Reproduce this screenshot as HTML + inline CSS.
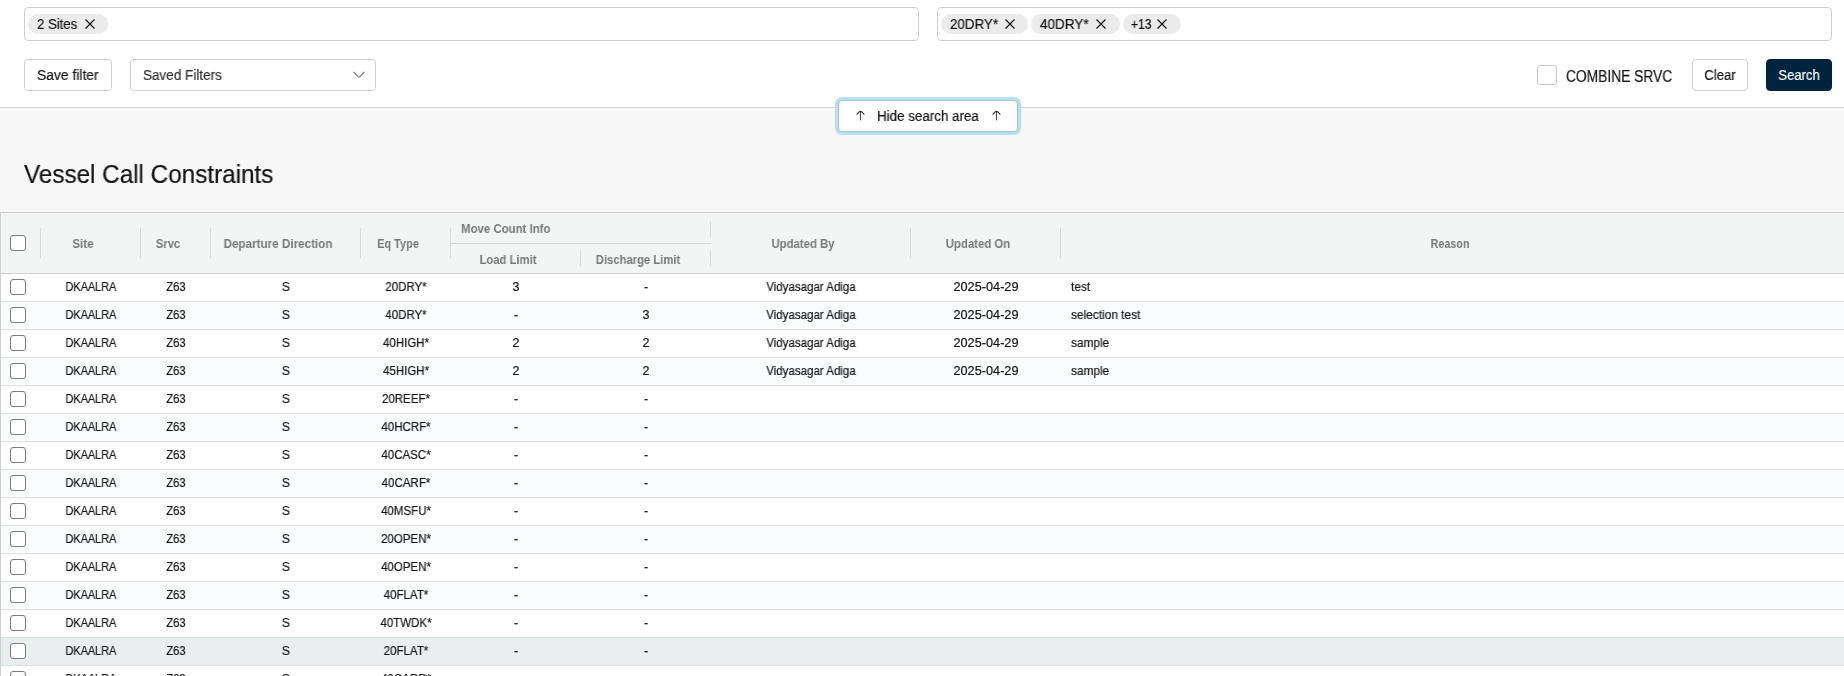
<!DOCTYPE html><html><head><meta charset="utf-8"><style>
*{box-sizing:border-box;margin:0;padding:0}
html,body{width:1844px;height:676px;overflow:hidden;background:#f7f7f7;font-family:"Liberation Sans", sans-serif;color:#141414;position:relative}
.a{position:absolute}
.t{position:absolute;white-space:nowrap;will-change:transform;-webkit-text-stroke:0.2px currentColor}
.box{position:absolute;border:1px solid #d0d0d0;border-radius:4px;background:#fff}
.chip{position:absolute;top:14px;height:20px;border-radius:10px;background:#ebebeb}
.vs{position:absolute;width:1px;background:#d9dcdc}
.row{position:absolute;left:1px;width:1843px;height:28px;border-bottom:1px solid #dcdfdf;background:#fff}
.cb{position:absolute;left:10px;width:16px;height:16px;border:1.5px solid #7b7b7b;border-radius:3px;background:#fff}
</style></head><body>
<div class="a" style="left:0;top:0;width:1844px;height:108px;background:#fff;border-bottom:1px solid #d6d6d6"></div>
<div class="box" style="left:24px;top:7px;width:895px;height:34px"></div>
<div class="box" style="left:937px;top:7px;width:895px;height:34px"></div>
<div class="chip" style="left:28px;width:80px"></div>
<div class="t" style="left:36.5px;transform-origin:0 50%;transform:scaleX(0.94);top:14.0px;font-size:14px;line-height:20px;color:#141414;">2 Sites</div>
<div class="a" style="left:85px;top:19px;line-height:0;width:10px;height:10px"><svg width="10" height="10" viewBox="0 0 10 10"><path d="M0.5 0.5L9.5 9.5M9.5 0.5L0.5 9.5" stroke="#141414" stroke-width="1.15" fill="none"/></svg></div>
<div class="chip" style="left:941px;width:87px"></div>
<div class="t" style="left:949.5px;transform-origin:0 50%;transform:scaleX(0.955);top:14.0px;font-size:14px;line-height:20px;color:#141414;">20DRY*</div>
<div class="a" style="left:1004.5px;top:19px;line-height:0;width:10px;height:10px"><svg width="10" height="10" viewBox="0 0 10 10"><path d="M0.5 0.5L9.5 9.5M9.5 0.5L0.5 9.5" stroke="#141414" stroke-width="1.15" fill="none"/></svg></div>
<div class="chip" style="left:1031px;width:89px"></div>
<div class="t" style="left:1039.5px;transform-origin:0 50%;transform:scaleX(0.965);top:14.0px;font-size:14px;line-height:20px;color:#141414;">40DRY*</div>
<div class="a" style="left:1096px;top:19px;line-height:0;width:10px;height:10px"><svg width="10" height="10" viewBox="0 0 10 10"><path d="M0.5 0.5L9.5 9.5M9.5 0.5L0.5 9.5" stroke="#141414" stroke-width="1.15" fill="none"/></svg></div>
<div class="chip" style="left:1123px;width:58px"></div>
<div class="t" style="left:1130.5px;transform-origin:0 50%;transform:scaleX(0.86);top:14.0px;font-size:14px;line-height:20px;color:#141414;">+13</div>
<div class="a" style="left:1157px;top:19px;line-height:0;width:10px;height:10px"><svg width="10" height="10" viewBox="0 0 10 10"><path d="M0.5 0.5L9.5 9.5M9.5 0.5L0.5 9.5" stroke="#141414" stroke-width="1.15" fill="none"/></svg></div>
<div class="box" style="left:24px;top:59px;width:88px;height:32px"></div>
<div class="t" style="left:36.5px;transform-origin:0 50%;transform:scaleX(0.99);top:65.0px;font-size:14px;line-height:20px;color:#141414;">Save filter</div>
<div class="box" style="left:130px;top:59px;width:246px;height:32px"></div>
<div class="t" style="left:142.5px;transform-origin:0 50%;transform:scaleX(0.965);top:65.0px;font-size:14px;line-height:20px;color:#333;">Saved Filters</div>
<svg class="a" style="left:352.5px;top:70.9px" width="12" height="7" viewBox="0 0 12 7"><path d="M0.6 0.8L5.1 5.6Q6 6.4 6.9 5.6L11.4 0.8" stroke="#6a6a6a" stroke-width="1.05" fill="none"/></svg>
<div class="a" style="left:1537px;top:65px;width:20px;height:20px;border:1px solid #c8c8c8;border-radius:3px;background:#fff"></div>
<div class="t" style="left:1566px;transform-origin:0 50%;transform:scaleX(0.862);top:65.5px;font-size:16px;line-height:22px;color:#141414;">COMBINE SRVC</div>
<div class="box" style="left:1692px;top:59px;width:56px;height:32px"></div>
<div class="t" style="left:1519.5px;width:400px;text-align:center;transform-origin:50% 50%;transform:scaleX(0.94);top:65.0px;font-size:14px;line-height:20px;color:#141414;">Clear</div>
<div class="box" style="left:1766px;top:59px;width:66px;height:32px;background:#00243d;border-color:#00243d"></div>
<div class="t" style="left:1598.6px;width:400px;text-align:center;transform-origin:50% 50%;transform:scaleX(0.93);top:65.0px;font-size:14px;line-height:20px;color:#fff;">Search</div>
<div class="a" style="left:838px;top:100px;width:180px;height:32px;border:1px solid #a9c2d2;border-radius:4px;background:#fff;box-shadow:0 0 0 3px #b7dff3"></div>
<div class="a" style="left:855.5px;top:110.3px;line-height:0"><svg width="9" height="11" viewBox="0 0 9 11"><path d="M4.5 10.3V1.6" stroke="#555" stroke-width="1.1" fill="none"/><path d="M0.7 4.6C1.9 3.1 3.2 1.2 4.5 1.2C5.8 1.2 7.1 3.1 8.3 4.6" stroke="#1a1a1a" stroke-width="1.1" fill="none"/></svg></div>
<div class="a" style="left:991.6px;top:110.3px;line-height:0"><svg width="9" height="11" viewBox="0 0 9 11"><path d="M4.5 10.3V1.6" stroke="#555" stroke-width="1.1" fill="none"/><path d="M0.7 4.6C1.9 3.1 3.2 1.2 4.5 1.2C5.8 1.2 7.1 3.1 8.3 4.6" stroke="#1a1a1a" stroke-width="1.1" fill="none"/></svg></div>
<div class="t" style="left:876.5px;transform-origin:0 50%;transform:scaleX(0.955);top:106.0px;font-size:14px;line-height:20px;color:#141414;">Hide search area</div>
<div class="t" style="left:24px;transform-origin:0 50%;transform:scaleX(0.97);top:156.5px;font-size:25px;line-height:35px;color:#141414;">Vessel Call Constraints</div>
<div class="a" style="left:0;top:212px;width:1844px;height:62px;background:#f3f5f5;border-top:1px solid #cfd1d1;border-bottom:1px solid #cfd1d1"></div>
<div class="a" style="left:0;top:212px;width:1px;height:464px;background:#cfd1d1"></div>
<div class="cb" style="top:235px"></div>
<div class="vs" style="left:40px;top:228px;height:30px"></div>
<div class="vs" style="left:140px;top:228px;height:30px"></div>
<div class="vs" style="left:210px;top:228px;height:30px"></div>
<div class="vs" style="left:360px;top:228px;height:30px"></div>
<div class="vs" style="left:450px;top:228px;height:30px"></div>
<div class="vs" style="left:910px;top:228px;height:30px"></div>
<div class="vs" style="left:1060px;top:228px;height:30px"></div>
<div class="vs" style="left:710px;top:221px;height:16px"></div>
<div class="vs" style="left:710px;top:250px;height:16px"></div>
<div class="vs" style="left:580px;top:250px;height:16px"></div>
<div class="a" style="left:450px;top:243px;width:261px;height:1px;background:#d3d6d6"></div>
<div class="t" style="left:-117.0px;width:400px;text-align:center;transform-origin:50% 50%;transform:scaleX(0.93);top:235.0px;font-size:12.5px;line-height:18px;font-weight:bold;-webkit-text-stroke:0;color:#787878;">Site</div>
<div class="t" style="left:-32.0px;width:400px;text-align:center;transform-origin:50% 50%;transform:scaleX(0.9);top:235.0px;font-size:12.5px;line-height:18px;font-weight:bold;-webkit-text-stroke:0;color:#787878;">Srvc</div>
<div class="t" style="left:78.0px;width:400px;text-align:center;transform-origin:50% 50%;transform:scaleX(0.934);top:235.0px;font-size:12.5px;line-height:18px;font-weight:bold;-webkit-text-stroke:0;color:#787878;">Departure Direction</div>
<div class="t" style="left:198.39999999999998px;width:400px;text-align:center;transform-origin:50% 50%;transform:scaleX(0.878);top:235.0px;font-size:12.5px;line-height:18px;font-weight:bold;-webkit-text-stroke:0;color:#787878;">Eq Type</div>
<div class="t" style="left:460.5px;transform-origin:0 50%;transform:scaleX(0.914);top:220.0px;font-size:12.5px;line-height:18px;font-weight:bold;-webkit-text-stroke:0;color:#787878;">Move Count Info</div>
<div class="t" style="left:308.0px;width:400px;text-align:center;transform-origin:50% 50%;transform:scaleX(0.902);top:251.0px;font-size:12.5px;line-height:18px;font-weight:bold;-webkit-text-stroke:0;color:#787878;">Load Limit</div>
<div class="t" style="left:437.79999999999995px;width:400px;text-align:center;transform-origin:50% 50%;transform:scaleX(0.899);top:251.0px;font-size:12.5px;line-height:18px;font-weight:bold;-webkit-text-stroke:0;color:#787878;">Discharge Limit</div>
<div class="t" style="left:603.0px;width:400px;text-align:center;transform-origin:50% 50%;transform:scaleX(0.907);top:235.0px;font-size:12.5px;line-height:18px;font-weight:bold;-webkit-text-stroke:0;color:#787878;">Updated By</div>
<div class="t" style="left:778.0px;width:400px;text-align:center;transform-origin:50% 50%;transform:scaleX(0.909);top:235.0px;font-size:12.5px;line-height:18px;font-weight:bold;-webkit-text-stroke:0;color:#787878;">Updated On</div>
<div class="t" style="left:1250.0px;width:400px;text-align:center;transform-origin:50% 50%;transform:scaleX(0.863);top:235.0px;font-size:12.5px;line-height:18px;font-weight:bold;-webkit-text-stroke:0;color:#787878;">Reason</div>
<div class="row" style="top:274px;background:#fff"></div>
<div class="cb" style="top:279px"></div>
<div class="t" style="left:-109.0px;width:400px;text-align:center;transform-origin:50% 50%;transform:scaleX(0.873);top:278.0px;font-size:12.5px;line-height:18px;color:#141414;">DKAALRA</div>
<div class="t" style="left:-24.0px;width:400px;text-align:center;transform-origin:50% 50%;transform:scaleX(0.9);top:278.0px;font-size:12.5px;line-height:18px;color:#141414;">Z63</div>
<div class="t" style="left:86.0px;width:400px;text-align:center;transform-origin:50% 50%;transform:scaleX(0.95);top:278.0px;font-size:12.5px;line-height:18px;color:#141414;">S</div>
<div class="t" style="left:205.7px;width:400px;text-align:center;transform-origin:50% 50%;transform:scaleX(0.921);top:278.0px;font-size:12.5px;line-height:18px;color:#141414;">20DRY*</div>
<div class="t" style="left:315.79999999999995px;width:400px;text-align:center;transform-origin:50% 50%;top:278.0px;font-size:12.5px;line-height:18px;color:#141414;">3</div>
<div class="t" style="left:445.70000000000005px;width:400px;text-align:center;transform-origin:50% 50%;top:278.0px;font-size:12.5px;line-height:18px;color:#141414;">-</div>
<div class="t" style="left:611.0px;width:400px;text-align:center;transform-origin:50% 50%;transform:scaleX(0.922);top:278.0px;font-size:12.5px;line-height:18px;color:#141414;">Vidyasagar Adiga</div>
<div class="t" style="left:786.0px;width:400px;text-align:center;transform-origin:50% 50%;transform:scaleX(1.017);top:278.0px;font-size:12.5px;line-height:18px;color:#141414;">2025-04-29</div>
<div class="t" style="left:1070.5px;transform-origin:0 50%;transform:scaleX(0.95);top:278.0px;font-size:12.5px;line-height:18px;color:#141414;">test</div>
<div class="row" style="top:302px;background:#fafbfd"></div>
<div class="cb" style="top:307px"></div>
<div class="t" style="left:-109.0px;width:400px;text-align:center;transform-origin:50% 50%;transform:scaleX(0.873);top:306.0px;font-size:12.5px;line-height:18px;color:#141414;">DKAALRA</div>
<div class="t" style="left:-24.0px;width:400px;text-align:center;transform-origin:50% 50%;transform:scaleX(0.9);top:306.0px;font-size:12.5px;line-height:18px;color:#141414;">Z63</div>
<div class="t" style="left:86.0px;width:400px;text-align:center;transform-origin:50% 50%;transform:scaleX(0.95);top:306.0px;font-size:12.5px;line-height:18px;color:#141414;">S</div>
<div class="t" style="left:205.7px;width:400px;text-align:center;transform-origin:50% 50%;transform:scaleX(0.921);top:306.0px;font-size:12.5px;line-height:18px;color:#141414;">40DRY*</div>
<div class="t" style="left:315.79999999999995px;width:400px;text-align:center;transform-origin:50% 50%;top:306.0px;font-size:12.5px;line-height:18px;color:#141414;">-</div>
<div class="t" style="left:445.70000000000005px;width:400px;text-align:center;transform-origin:50% 50%;top:306.0px;font-size:12.5px;line-height:18px;color:#141414;">3</div>
<div class="t" style="left:611.0px;width:400px;text-align:center;transform-origin:50% 50%;transform:scaleX(0.922);top:306.0px;font-size:12.5px;line-height:18px;color:#141414;">Vidyasagar Adiga</div>
<div class="t" style="left:786.0px;width:400px;text-align:center;transform-origin:50% 50%;transform:scaleX(1.017);top:306.0px;font-size:12.5px;line-height:18px;color:#141414;">2025-04-29</div>
<div class="t" style="left:1070.5px;transform-origin:0 50%;transform:scaleX(0.95);top:306.0px;font-size:12.5px;line-height:18px;color:#141414;">selection test</div>
<div class="row" style="top:330px;background:#fff"></div>
<div class="cb" style="top:335px"></div>
<div class="t" style="left:-109.0px;width:400px;text-align:center;transform-origin:50% 50%;transform:scaleX(0.873);top:334.0px;font-size:12.5px;line-height:18px;color:#141414;">DKAALRA</div>
<div class="t" style="left:-24.0px;width:400px;text-align:center;transform-origin:50% 50%;transform:scaleX(0.9);top:334.0px;font-size:12.5px;line-height:18px;color:#141414;">Z63</div>
<div class="t" style="left:86.0px;width:400px;text-align:center;transform-origin:50% 50%;transform:scaleX(0.95);top:334.0px;font-size:12.5px;line-height:18px;color:#141414;">S</div>
<div class="t" style="left:205.7px;width:400px;text-align:center;transform-origin:50% 50%;transform:scaleX(0.921);top:334.0px;font-size:12.5px;line-height:18px;color:#141414;">40HIGH*</div>
<div class="t" style="left:315.79999999999995px;width:400px;text-align:center;transform-origin:50% 50%;top:334.0px;font-size:12.5px;line-height:18px;color:#141414;">2</div>
<div class="t" style="left:445.70000000000005px;width:400px;text-align:center;transform-origin:50% 50%;top:334.0px;font-size:12.5px;line-height:18px;color:#141414;">2</div>
<div class="t" style="left:611.0px;width:400px;text-align:center;transform-origin:50% 50%;transform:scaleX(0.922);top:334.0px;font-size:12.5px;line-height:18px;color:#141414;">Vidyasagar Adiga</div>
<div class="t" style="left:786.0px;width:400px;text-align:center;transform-origin:50% 50%;transform:scaleX(1.017);top:334.0px;font-size:12.5px;line-height:18px;color:#141414;">2025-04-29</div>
<div class="t" style="left:1070.5px;transform-origin:0 50%;transform:scaleX(0.95);top:334.0px;font-size:12.5px;line-height:18px;color:#141414;">sample</div>
<div class="row" style="top:358px;background:#fafbfd"></div>
<div class="cb" style="top:363px"></div>
<div class="t" style="left:-109.0px;width:400px;text-align:center;transform-origin:50% 50%;transform:scaleX(0.873);top:362.0px;font-size:12.5px;line-height:18px;color:#141414;">DKAALRA</div>
<div class="t" style="left:-24.0px;width:400px;text-align:center;transform-origin:50% 50%;transform:scaleX(0.9);top:362.0px;font-size:12.5px;line-height:18px;color:#141414;">Z63</div>
<div class="t" style="left:86.0px;width:400px;text-align:center;transform-origin:50% 50%;transform:scaleX(0.95);top:362.0px;font-size:12.5px;line-height:18px;color:#141414;">S</div>
<div class="t" style="left:205.7px;width:400px;text-align:center;transform-origin:50% 50%;transform:scaleX(0.921);top:362.0px;font-size:12.5px;line-height:18px;color:#141414;">45HIGH*</div>
<div class="t" style="left:315.79999999999995px;width:400px;text-align:center;transform-origin:50% 50%;top:362.0px;font-size:12.5px;line-height:18px;color:#141414;">2</div>
<div class="t" style="left:445.70000000000005px;width:400px;text-align:center;transform-origin:50% 50%;top:362.0px;font-size:12.5px;line-height:18px;color:#141414;">2</div>
<div class="t" style="left:611.0px;width:400px;text-align:center;transform-origin:50% 50%;transform:scaleX(0.922);top:362.0px;font-size:12.5px;line-height:18px;color:#141414;">Vidyasagar Adiga</div>
<div class="t" style="left:786.0px;width:400px;text-align:center;transform-origin:50% 50%;transform:scaleX(1.017);top:362.0px;font-size:12.5px;line-height:18px;color:#141414;">2025-04-29</div>
<div class="t" style="left:1070.5px;transform-origin:0 50%;transform:scaleX(0.95);top:362.0px;font-size:12.5px;line-height:18px;color:#141414;">sample</div>
<div class="row" style="top:386px;background:#fff"></div>
<div class="cb" style="top:391px"></div>
<div class="t" style="left:-109.0px;width:400px;text-align:center;transform-origin:50% 50%;transform:scaleX(0.873);top:390.0px;font-size:12.5px;line-height:18px;color:#141414;">DKAALRA</div>
<div class="t" style="left:-24.0px;width:400px;text-align:center;transform-origin:50% 50%;transform:scaleX(0.9);top:390.0px;font-size:12.5px;line-height:18px;color:#141414;">Z63</div>
<div class="t" style="left:86.0px;width:400px;text-align:center;transform-origin:50% 50%;transform:scaleX(0.95);top:390.0px;font-size:12.5px;line-height:18px;color:#141414;">S</div>
<div class="t" style="left:205.7px;width:400px;text-align:center;transform-origin:50% 50%;transform:scaleX(0.921);top:390.0px;font-size:12.5px;line-height:18px;color:#141414;">20REEF*</div>
<div class="t" style="left:315.79999999999995px;width:400px;text-align:center;transform-origin:50% 50%;top:390.0px;font-size:12.5px;line-height:18px;color:#141414;">-</div>
<div class="t" style="left:445.70000000000005px;width:400px;text-align:center;transform-origin:50% 50%;top:390.0px;font-size:12.5px;line-height:18px;color:#141414;">-</div>
<div class="row" style="top:414px;background:#fafbfd"></div>
<div class="cb" style="top:419px"></div>
<div class="t" style="left:-109.0px;width:400px;text-align:center;transform-origin:50% 50%;transform:scaleX(0.873);top:418.0px;font-size:12.5px;line-height:18px;color:#141414;">DKAALRA</div>
<div class="t" style="left:-24.0px;width:400px;text-align:center;transform-origin:50% 50%;transform:scaleX(0.9);top:418.0px;font-size:12.5px;line-height:18px;color:#141414;">Z63</div>
<div class="t" style="left:86.0px;width:400px;text-align:center;transform-origin:50% 50%;transform:scaleX(0.95);top:418.0px;font-size:12.5px;line-height:18px;color:#141414;">S</div>
<div class="t" style="left:205.7px;width:400px;text-align:center;transform-origin:50% 50%;transform:scaleX(0.921);top:418.0px;font-size:12.5px;line-height:18px;color:#141414;">40HCRF*</div>
<div class="t" style="left:315.79999999999995px;width:400px;text-align:center;transform-origin:50% 50%;top:418.0px;font-size:12.5px;line-height:18px;color:#141414;">-</div>
<div class="t" style="left:445.70000000000005px;width:400px;text-align:center;transform-origin:50% 50%;top:418.0px;font-size:12.5px;line-height:18px;color:#141414;">-</div>
<div class="row" style="top:442px;background:#fff"></div>
<div class="cb" style="top:447px"></div>
<div class="t" style="left:-109.0px;width:400px;text-align:center;transform-origin:50% 50%;transform:scaleX(0.873);top:446.0px;font-size:12.5px;line-height:18px;color:#141414;">DKAALRA</div>
<div class="t" style="left:-24.0px;width:400px;text-align:center;transform-origin:50% 50%;transform:scaleX(0.9);top:446.0px;font-size:12.5px;line-height:18px;color:#141414;">Z63</div>
<div class="t" style="left:86.0px;width:400px;text-align:center;transform-origin:50% 50%;transform:scaleX(0.95);top:446.0px;font-size:12.5px;line-height:18px;color:#141414;">S</div>
<div class="t" style="left:205.7px;width:400px;text-align:center;transform-origin:50% 50%;transform:scaleX(0.921);top:446.0px;font-size:12.5px;line-height:18px;color:#141414;">40CASC*</div>
<div class="t" style="left:315.79999999999995px;width:400px;text-align:center;transform-origin:50% 50%;top:446.0px;font-size:12.5px;line-height:18px;color:#141414;">-</div>
<div class="t" style="left:445.70000000000005px;width:400px;text-align:center;transform-origin:50% 50%;top:446.0px;font-size:12.5px;line-height:18px;color:#141414;">-</div>
<div class="row" style="top:470px;background:#fafbfd"></div>
<div class="cb" style="top:475px"></div>
<div class="t" style="left:-109.0px;width:400px;text-align:center;transform-origin:50% 50%;transform:scaleX(0.873);top:474.0px;font-size:12.5px;line-height:18px;color:#141414;">DKAALRA</div>
<div class="t" style="left:-24.0px;width:400px;text-align:center;transform-origin:50% 50%;transform:scaleX(0.9);top:474.0px;font-size:12.5px;line-height:18px;color:#141414;">Z63</div>
<div class="t" style="left:86.0px;width:400px;text-align:center;transform-origin:50% 50%;transform:scaleX(0.95);top:474.0px;font-size:12.5px;line-height:18px;color:#141414;">S</div>
<div class="t" style="left:205.7px;width:400px;text-align:center;transform-origin:50% 50%;transform:scaleX(0.921);top:474.0px;font-size:12.5px;line-height:18px;color:#141414;">40CARF*</div>
<div class="t" style="left:315.79999999999995px;width:400px;text-align:center;transform-origin:50% 50%;top:474.0px;font-size:12.5px;line-height:18px;color:#141414;">-</div>
<div class="t" style="left:445.70000000000005px;width:400px;text-align:center;transform-origin:50% 50%;top:474.0px;font-size:12.5px;line-height:18px;color:#141414;">-</div>
<div class="row" style="top:498px;background:#fff"></div>
<div class="cb" style="top:503px"></div>
<div class="t" style="left:-109.0px;width:400px;text-align:center;transform-origin:50% 50%;transform:scaleX(0.873);top:502.0px;font-size:12.5px;line-height:18px;color:#141414;">DKAALRA</div>
<div class="t" style="left:-24.0px;width:400px;text-align:center;transform-origin:50% 50%;transform:scaleX(0.9);top:502.0px;font-size:12.5px;line-height:18px;color:#141414;">Z63</div>
<div class="t" style="left:86.0px;width:400px;text-align:center;transform-origin:50% 50%;transform:scaleX(0.95);top:502.0px;font-size:12.5px;line-height:18px;color:#141414;">S</div>
<div class="t" style="left:205.7px;width:400px;text-align:center;transform-origin:50% 50%;transform:scaleX(0.921);top:502.0px;font-size:12.5px;line-height:18px;color:#141414;">40MSFU*</div>
<div class="t" style="left:315.79999999999995px;width:400px;text-align:center;transform-origin:50% 50%;top:502.0px;font-size:12.5px;line-height:18px;color:#141414;">-</div>
<div class="t" style="left:445.70000000000005px;width:400px;text-align:center;transform-origin:50% 50%;top:502.0px;font-size:12.5px;line-height:18px;color:#141414;">-</div>
<div class="row" style="top:526px;background:#fafbfd"></div>
<div class="cb" style="top:531px"></div>
<div class="t" style="left:-109.0px;width:400px;text-align:center;transform-origin:50% 50%;transform:scaleX(0.873);top:530.0px;font-size:12.5px;line-height:18px;color:#141414;">DKAALRA</div>
<div class="t" style="left:-24.0px;width:400px;text-align:center;transform-origin:50% 50%;transform:scaleX(0.9);top:530.0px;font-size:12.5px;line-height:18px;color:#141414;">Z63</div>
<div class="t" style="left:86.0px;width:400px;text-align:center;transform-origin:50% 50%;transform:scaleX(0.95);top:530.0px;font-size:12.5px;line-height:18px;color:#141414;">S</div>
<div class="t" style="left:205.7px;width:400px;text-align:center;transform-origin:50% 50%;transform:scaleX(0.921);top:530.0px;font-size:12.5px;line-height:18px;color:#141414;">20OPEN*</div>
<div class="t" style="left:315.79999999999995px;width:400px;text-align:center;transform-origin:50% 50%;top:530.0px;font-size:12.5px;line-height:18px;color:#141414;">-</div>
<div class="t" style="left:445.70000000000005px;width:400px;text-align:center;transform-origin:50% 50%;top:530.0px;font-size:12.5px;line-height:18px;color:#141414;">-</div>
<div class="row" style="top:554px;background:#fff"></div>
<div class="cb" style="top:559px"></div>
<div class="t" style="left:-109.0px;width:400px;text-align:center;transform-origin:50% 50%;transform:scaleX(0.873);top:558.0px;font-size:12.5px;line-height:18px;color:#141414;">DKAALRA</div>
<div class="t" style="left:-24.0px;width:400px;text-align:center;transform-origin:50% 50%;transform:scaleX(0.9);top:558.0px;font-size:12.5px;line-height:18px;color:#141414;">Z63</div>
<div class="t" style="left:86.0px;width:400px;text-align:center;transform-origin:50% 50%;transform:scaleX(0.95);top:558.0px;font-size:12.5px;line-height:18px;color:#141414;">S</div>
<div class="t" style="left:205.7px;width:400px;text-align:center;transform-origin:50% 50%;transform:scaleX(0.921);top:558.0px;font-size:12.5px;line-height:18px;color:#141414;">40OPEN*</div>
<div class="t" style="left:315.79999999999995px;width:400px;text-align:center;transform-origin:50% 50%;top:558.0px;font-size:12.5px;line-height:18px;color:#141414;">-</div>
<div class="t" style="left:445.70000000000005px;width:400px;text-align:center;transform-origin:50% 50%;top:558.0px;font-size:12.5px;line-height:18px;color:#141414;">-</div>
<div class="row" style="top:582px;background:#fafbfd"></div>
<div class="cb" style="top:587px"></div>
<div class="t" style="left:-109.0px;width:400px;text-align:center;transform-origin:50% 50%;transform:scaleX(0.873);top:586.0px;font-size:12.5px;line-height:18px;color:#141414;">DKAALRA</div>
<div class="t" style="left:-24.0px;width:400px;text-align:center;transform-origin:50% 50%;transform:scaleX(0.9);top:586.0px;font-size:12.5px;line-height:18px;color:#141414;">Z63</div>
<div class="t" style="left:86.0px;width:400px;text-align:center;transform-origin:50% 50%;transform:scaleX(0.95);top:586.0px;font-size:12.5px;line-height:18px;color:#141414;">S</div>
<div class="t" style="left:205.7px;width:400px;text-align:center;transform-origin:50% 50%;transform:scaleX(0.921);top:586.0px;font-size:12.5px;line-height:18px;color:#141414;">40FLAT*</div>
<div class="t" style="left:315.79999999999995px;width:400px;text-align:center;transform-origin:50% 50%;top:586.0px;font-size:12.5px;line-height:18px;color:#141414;">-</div>
<div class="t" style="left:445.70000000000005px;width:400px;text-align:center;transform-origin:50% 50%;top:586.0px;font-size:12.5px;line-height:18px;color:#141414;">-</div>
<div class="row" style="top:610px;background:#fff"></div>
<div class="cb" style="top:615px"></div>
<div class="t" style="left:-109.0px;width:400px;text-align:center;transform-origin:50% 50%;transform:scaleX(0.873);top:614.0px;font-size:12.5px;line-height:18px;color:#141414;">DKAALRA</div>
<div class="t" style="left:-24.0px;width:400px;text-align:center;transform-origin:50% 50%;transform:scaleX(0.9);top:614.0px;font-size:12.5px;line-height:18px;color:#141414;">Z63</div>
<div class="t" style="left:86.0px;width:400px;text-align:center;transform-origin:50% 50%;transform:scaleX(0.95);top:614.0px;font-size:12.5px;line-height:18px;color:#141414;">S</div>
<div class="t" style="left:205.7px;width:400px;text-align:center;transform-origin:50% 50%;transform:scaleX(0.921);top:614.0px;font-size:12.5px;line-height:18px;color:#141414;">40TWDK*</div>
<div class="t" style="left:315.79999999999995px;width:400px;text-align:center;transform-origin:50% 50%;top:614.0px;font-size:12.5px;line-height:18px;color:#141414;">-</div>
<div class="t" style="left:445.70000000000005px;width:400px;text-align:center;transform-origin:50% 50%;top:614.0px;font-size:12.5px;line-height:18px;color:#141414;">-</div>
<div class="row" style="top:638px;background:#ebeeef"></div>
<div class="cb" style="top:643px"></div>
<div class="t" style="left:-109.0px;width:400px;text-align:center;transform-origin:50% 50%;transform:scaleX(0.873);top:642.0px;font-size:12.5px;line-height:18px;color:#141414;">DKAALRA</div>
<div class="t" style="left:-24.0px;width:400px;text-align:center;transform-origin:50% 50%;transform:scaleX(0.9);top:642.0px;font-size:12.5px;line-height:18px;color:#141414;">Z63</div>
<div class="t" style="left:86.0px;width:400px;text-align:center;transform-origin:50% 50%;transform:scaleX(0.95);top:642.0px;font-size:12.5px;line-height:18px;color:#141414;">S</div>
<div class="t" style="left:205.7px;width:400px;text-align:center;transform-origin:50% 50%;transform:scaleX(0.921);top:642.0px;font-size:12.5px;line-height:18px;color:#141414;">20FLAT*</div>
<div class="t" style="left:315.79999999999995px;width:400px;text-align:center;transform-origin:50% 50%;top:642.0px;font-size:12.5px;line-height:18px;color:#141414;">-</div>
<div class="t" style="left:445.70000000000005px;width:400px;text-align:center;transform-origin:50% 50%;top:642.0px;font-size:12.5px;line-height:18px;color:#141414;">-</div>
<div class="row" style="top:666px;background:#fff"></div>
<div class="cb" style="top:671px"></div>
<div class="t" style="left:-109.0px;width:400px;text-align:center;transform-origin:50% 50%;transform:scaleX(0.873);top:670.0px;font-size:12.5px;line-height:18px;color:#141414;">DKAALRA</div>
<div class="t" style="left:-24.0px;width:400px;text-align:center;transform-origin:50% 50%;transform:scaleX(0.9);top:670.0px;font-size:12.5px;line-height:18px;color:#141414;">Z63</div>
<div class="t" style="left:86.0px;width:400px;text-align:center;transform-origin:50% 50%;transform:scaleX(0.95);top:670.0px;font-size:12.5px;line-height:18px;color:#141414;">S</div>
<div class="t" style="left:205.7px;width:400px;text-align:center;transform-origin:50% 50%;transform:scaleX(0.921);top:670.0px;font-size:12.5px;line-height:18px;color:#141414;">40CARR*</div>
<div class="t" style="left:315.79999999999995px;width:400px;text-align:center;transform-origin:50% 50%;top:670.0px;font-size:12.5px;line-height:18px;color:#141414;">-</div>
<div class="t" style="left:445.70000000000005px;width:400px;text-align:center;transform-origin:50% 50%;top:670.0px;font-size:12.5px;line-height:18px;color:#141414;">-</div>
</body></html>
